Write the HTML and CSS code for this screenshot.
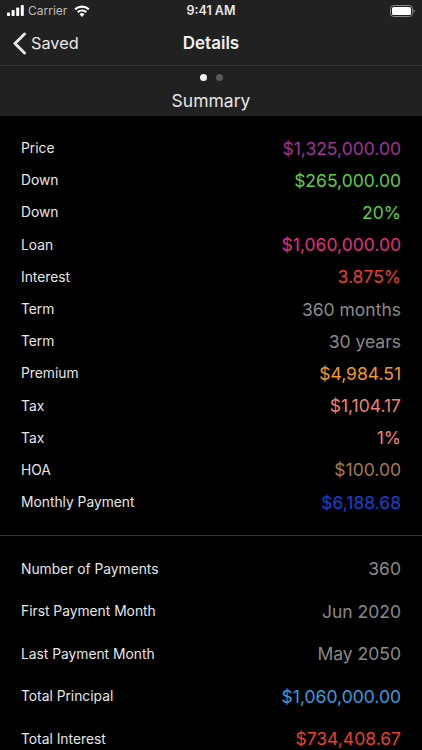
FILE: index.html
```html
<!DOCTYPE html>
<html lang="en">
<head>
<meta charset="utf-8">
<title>Details</title>
<link rel="stylesheet" href="styles.css">
</head>
<body>
<div class="screen">
  <header class="top">
    <div class="status">
      <div class="status-left">
        <svg class="signal" width="17" height="11" viewBox="0 0 17 11"><rect x="0" y="7.5" width="3" height="3.5" rx=".7"/><rect x="4.6" y="5" width="3" height="6" rx=".7"/><rect x="9.2" y="2.5" width="3" height="8.5" rx=".7"/><rect x="13.8" y="0" width="3" height="11" rx=".7"/></svg>
        <span class="carrier">Carrier</span>
        <svg class="wifi" width="16" height="12" viewBox="0 0 16 12"><path d="M8 12 5.5 9.2a3.6 3.6 0 0 1 5 0Z"/><path d="M4.4 8 3 6.4a7.2 7.2 0 0 1 10 0L11.6 8a5.2 5.2 0 0 0-7.2 0Z"/><path d="M1.9 5.2.4 3.6a11 11 0 0 1 15.2 0l-1.5 1.6a8.9 8.9 0 0 0-12.2 0Z"/></svg>
      </div>
      <span class="clock">9:41 AM</span>
      <svg class="battery" width="25" height="12" viewBox="0 0 25 12"><rect x=".5" y=".5" width="22" height="11" rx="3" fill="none" stroke="#8a8a8a"/><rect x="2" y="2" width="19" height="8" rx="1.6" fill="#fff"/><path d="M23.6 4.2c.8.3 1.2 1 1.2 1.8s-.4 1.5-1.2 1.8Z" fill="#8a8a8a"/></svg>
    </div>
    <nav class="nav">
      <div class="back">
        <svg width="15" height="23" viewBox="0 0 15 23"><path d="M12.5 2 3 11.5 12.5 21" fill="none" stroke="#e8e8e8" stroke-width="3" stroke-linecap="round" stroke-linejoin="round"/></svg>
        <span>Saved</span>
      </div>
      <h1>Details</h1>
    </nav>
    <div class="pager">
      <div class="dots"><i class="dot on"></i><i class="dot"></i></div>
      <div class="page-title">Summary</div>
    </div>
  </header>
  <main>
    <section class="summary">
      <div class="row"><span>Price</span><b class="purple">$1,325,000.00</b></div>
      <div class="row"><span>Down</span><b class="green">$265,000.00</b></div>
      <div class="row"><span>Down</span><b class="green">20%</b></div>
      <div class="row"><span>Loan</span><b class="pink">$1,060,000.00</b></div>
      <div class="row"><span>Interest</span><b class="red">3.875%</b></div>
      <div class="row"><span>Term</span><b class="gray">360 months</b></div>
      <div class="row"><span>Term</span><b class="gray">30 years</b></div>
      <div class="row"><span>Premium</span><b class="orange">$4,984.51</b></div>
      <div class="row"><span>Tax</span><b class="salmon">$1,104.17</b></div>
      <div class="row"><span>Tax</span><b class="salmon">1%</b></div>
      <div class="row"><span>HOA</span><b class="brown">$100.00</b></div>
      <div class="row"><span>Monthly Payment</span><b class="blue">$6,188.68</b></div>
    </section>
    <section class="totals">
      <div class="row"><span>Number of Payments</span><b class="gray">360</b></div>
      <div class="row"><span>First Payment Month</span><b class="gray">Jun 2020</b></div>
      <div class="row"><span>Last Payment Month</span><b class="gray">May 2050</b></div>
      <div class="row"><span>Total Principal</span><b class="sky">$1,060,000.00</b></div>
      <div class="row"><span>Total Interest</span><b class="red">$734,408.67</b></div>
    </section>
  </main>
</div>
</body>
</html>
```
FILE: styles.css
```css
* { box-sizing: border-box; }
html, body { margin: 0; height: 100%; background: #000; }
body { font-family: Inter, "Liberation Sans", sans-serif; color: #e6e6e6; overflow: hidden; }
.screen { width: 422px; height: 750px; overflow: hidden; display: flex; flex-direction: column; }
.top { background: #212121; height: 116px; flex: none; }
.status { height: 21px; display: flex; align-items: center; justify-content: space-between; padding: 0 7px; position: relative; }
.status-left { display: flex; align-items: center; gap: 4px; }
.signal { fill: #fff; }
.wifi { fill: #fff; margin-left: 3px; }
.carrier { font-size: 12px; color: #bdbdbd; }
.clock { position: absolute; left: 0; right: 0; text-align: center; font-size: 12.5px; font-weight: 600; color: #e8e8e8; }
.nav { height: 45px; display: grid; grid-template-columns: 1fr auto 1fr; align-items: center; border-bottom: 1px solid #353535; }
.back { display: flex; align-items: center; gap: 4px; padding-left: 12px; font-size: 16.3px; color: #e8e8e8; }
.nav h1 { margin: 0; font-size: 17px; font-weight: 600; color: #efefef; }
.pager { display: flex; flex-direction: column; align-items: center; }
.dots { display: flex; gap: 9px; padding-top: 6px; height: 16px; align-items: center; }
.dot { width: 7px; height: 7px; border-radius: 50%; background: #5a5a5a; }
.dot.on { background: #f2f2f2; }
.page-title { font-size: 17.5px; line-height: 24px; margin-top: 7px; color: #e6e6e6; }
main { padding: 16px 21px 0; }
.row { display: flex; justify-content: space-between; align-items: center; }
.row span { font-size: 13.8px; color: #e6e6e6; }
.row b { font-size: 17.5px; font-weight: 400; }
.summary { padding-bottom: 17px; }
.summary .row { height: 32.2px; }
.totals { margin: 0 -21px; padding: 11px 21px 0; border-top: 1px solid #353535; }
.totals .row { height: 42.5px; }
.purple { color: #a0329c; }
.green { color: #5ad03f; }
.pink { color: #e0307f; }
.red { color: #e8402f; }
.gray { color: #8a8a8a; }
.orange { color: #f09a22; }
.salmon { color: #f0807a; }
.brown { color: #a67c48; }
.blue { color: #1a3fd8; }
.sky { color: #2f9fe0; }
```
